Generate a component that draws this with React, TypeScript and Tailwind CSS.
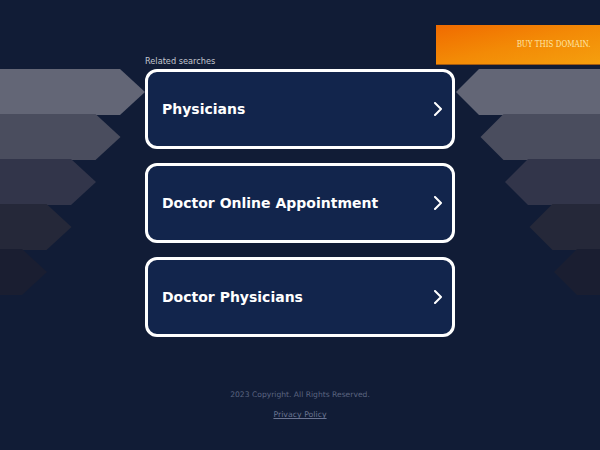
import React from "react";

const items = ["Physicians", "Doctor Online Appointment", "Doctor Physicians"];

function Stripes() {
  const colors = ["#636676", "#4a4d5e", "#32354a", "#252839", "#1a1e31"];
  const rows = [0, 1, 2, 3, 4];
  return (
    <svg className="absolute left-0 top-0" width="600" height="450" viewBox="0 0 600 450">
      {rows.map((i) => {
        const y0 = 69 + i * 45;
        const y1 = y0 + 46;
        const ym = y0 + 23;
        const flatL = 120 - i * 24.5;
        const tipL = 145 - i * 24.5;
        const flatR = 479 + i * 24.5;
        const tipR = 456 + i * 24.5;
        return (
          <g key={i}>
            <polygon points={`0,${y0} ${flatL},${y0} ${tipL},${ym} ${flatL},${y1} 0,${y1}`} fill={colors[i]} />
            <polygon points={`600,${y0} ${flatR},${y0} ${tipR},${ym} ${flatR},${y1} 600,${y1}`} fill={colors[i]} />
          </g>
        );
      })}
    </svg>
  );
}

export default function App() {
  return (
    <div className="relative w-[600px] h-[450px] overflow-hidden bg-[#111c36]" style={{ fontFamily: "'DejaVu Sans', sans-serif" }}>
      <Stripes />
      <div className="absolute right-0 top-[25px] w-[164px] h-[40px] bg-gradient-to-br from-[#f06a00] via-[#f38a06] to-[#f59f0e] flex items-center justify-end pr-[10px] border-b border-[#a35a10]">
        <span className="text-[9px] text-[#fde6a8] inline-block origin-right" style={{ fontFamily: "'DejaVu Serif', serif", transform: "scaleX(0.79)" }}>
          BUY THIS DOMAIN.
        </span>
      </div>
      <div className="relative flex flex-col items-center pt-[55px]">
        <div className="w-[310px]">
          <div className="text-[8.2px] leading-[12px] text-[#c3c6cf] mb-[2px]">Related searches</div>
          <div className="flex flex-col gap-[14px]">
            {items.map((t) => (
              <div key={t} className="h-[80px] rounded-[12px] border-[3px] border-white bg-[#12254c] flex items-center justify-between pl-[14px] pr-[9px]">
                <span className="text-white font-bold text-[14px] leading-[16px]">{t}</span>
                <svg width="10" height="14" viewBox="0 0 10 14" fill="none">
                  <path d="M2 1 L8 7 L2 13" stroke="white" strokeWidth="2" strokeLinecap="round" strokeLinejoin="round" />
                </svg>
              </div>
            ))}
          </div>
        </div>
        <div className="mt-[52px] text-[7.6px] text-[#5b6480]">2023 Copyright. All Rights Reserved.</div>
        <div className="mt-[9px] text-[7.8px] text-[#6b7491] underline">Privacy Policy </div>
      </div>
    </div>
  );
}
